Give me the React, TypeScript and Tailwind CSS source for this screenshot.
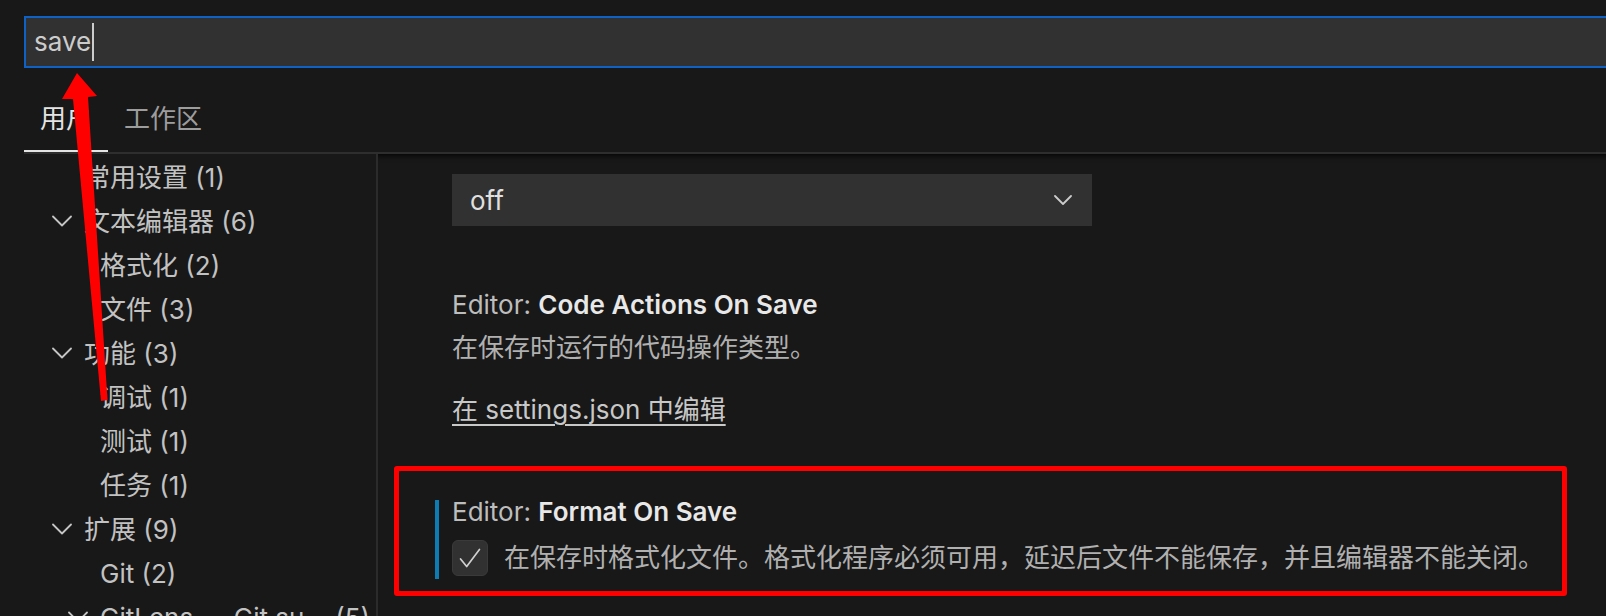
import React from "react";

type Row = { label: string; count: number; level: 1 | 2; expanded?: boolean; truncate?: boolean };

const rows: Row[] = [
  { label: "常用设置", count: 1, level: 1 },
  { label: "文本编辑器", count: 6, level: 1, expanded: true },
  { label: "格式化", count: 2, level: 2 },
  { label: "文件", count: 3, level: 2 },
  { label: "功能", count: 3, level: 1, expanded: true },
  { label: "调试", count: 1, level: 2 },
  { label: "测试", count: 1, level: 2 },
  { label: "任务", count: 1, level: 2 },
  { label: "扩展", count: 9, level: 1, expanded: true },
  { label: "Git", count: 2, level: 2 },
  { label: "GitLens — Git supercharged", count: 5, level: 2, expanded: true, truncate: true },
];

function Chevron({ className }: { className?: string }) {
  return (
    <svg width="20" height="12" viewBox="0 0 20 12" className={className} fill="none">
      <polyline points="1,1.5 10,10.5 19,1.5" stroke="#c5c5c5" strokeWidth="1.8" strokeLinejoin="round" strokeLinecap="round" />
    </svg>
  );
}

function TreeRow({ row }: { row: Row }) {
  return (
    <div className={`flex h-[44px] items-center pr-[6px] ${row.level === 1 ? "pl-[52px]" : "pl-[68px]"}`}>
      <div className="w-[32px] shrink-0 flex items-center">{row.expanded ? <Chevron /> : null}</div>
      {row.truncate ? (
        <>
          <span className="min-w-0 truncate">{row.label}</span>
          <span className="ml-auto shrink-0 pl-[8px]">({row.count})</span>
        </>
      ) : (
        <span className="whitespace-nowrap">
          {row.label} ({row.count})
        </span>
      )}
    </div>
  );
}

export default function App() {
  return (
    <div
      className="relative w-[1606px] h-[616px] overflow-hidden bg-[#181818] text-[#c5c5c5]"
      style={{ fontFamily: "Inter, 'Noto Sans CJK SC', sans-serif" }}
    >
      {/* search */}
      <div className="pt-[16px] pl-[24px]">
        <div className="h-[52px] w-[1600px] border-2 border-[#0f62c5] bg-[#313131] flex items-center pl-[8px]">
          <span className="text-[26px] leading-[30px] text-[#cccccc]">save</span>
          <span className="ml-[1px] w-[2px] h-[38px] bg-[#cccccc]" />
        </div>
      </div>

      {/* tabs */}
      <div className="ml-[24px] flex border-b-2 border-[#2e2e2e]">
        <div className="h-[84px] flex items-end pb-[16px] px-[16px] border-b-2 border-[#e4e4e4] -mb-[2px] text-[26px] leading-[30px] text-[#e4e4e4]">
          用户
        </div>
        <div className="h-[84px] flex items-end pb-[18px] px-[16px] text-[26px] leading-[30px] text-[#9d9d9d]">
          工作区
        </div>
      </div>

      {/* main */}
      <div className="flex h-[470px]">
        <div className="w-[378px] shrink-0 border-r-2 border-[#2b2b2b] pt-[1px] text-[26px] text-[#c2c2c2]">
          {rows.map((r, i) => (
            <TreeRow key={i} row={r} />
          ))}
        </div>
        <div className="flex-1 pt-[20px] shadow-[inset_0_7px_6px_-6px_#000]">
          <div className="ml-[74px] w-[640px] h-[52px] bg-[#313131] flex items-center pl-[18px] pr-[20px]">
            <span className="text-[26px] text-[#e0e0e0]">off</span>
            <svg width="18" height="10" viewBox="0 0 18 10" className="ml-auto" fill="none">
              <polyline points="1,1 9,9 17,1" stroke="#cccccc" strokeWidth="1.8" strokeLinejoin="round" strokeLinecap="round" />
            </svg>
          </div>

          <div className="ml-[74px] mt-[67px] text-[26px] leading-[24px] whitespace-nowrap">
            <span className="text-[#bdbdbd]">Editor: </span>
            <span className="font-semibold text-[#e8e8e8]">Code Actions On Save</span>
          </div>
          <div className="ml-[74px] mt-[19px] text-[26px] leading-[24px] text-[#b0b0b0] whitespace-nowrap">
            在保存时运行的代码操作类型。
          </div>
          <div className="ml-[74px] mt-[38px] text-[26px] leading-[24px] text-[#c8c8c8] underline underline-offset-[5px] decoration-[2px] whitespace-nowrap">
            在 settings.json 中编辑
          </div>

          <div className="ml-[57px] mt-[78px] border-l-[4px] border-[#0c7db4] pl-[13px] pb-[3px]">
            <div className="text-[26px] leading-[24px] whitespace-nowrap">
              <span className="text-[#bdbdbd]">Editor: </span>
              <span className="font-semibold text-[#e8e8e8]">Format On Save</span>
            </div>
            <div className="mt-[16px] flex items-center gap-[16px]">
              <div className="w-[36px] h-[36px] rounded-[6px] bg-[#313131] border border-[#3a3a3a] flex items-center justify-center">
                <svg width="36" height="36" viewBox="0 0 36 36" fill="none">
                  <polyline points="8,19 14.5,27 28,9" stroke="#d0d0d0" strokeWidth="1.8" strokeLinejoin="round" strokeLinecap="round" />
                </svg>
              </div>
              <span className="text-[26px] leading-[30px] text-[#b0b0b0] whitespace-nowrap">
                在保存时格式化文件。格式化程序必须可用，延迟后文件不能保存，并且编辑器不能关闭。
              </span>
            </div>
          </div>
        </div>
      </div>

      {/* annotation: red rectangle */}
      <div className="absolute left-[394px] top-[466px] w-[1173px] h-[130px] border-[5px] border-[#ff0000] rounded-[3px]" />

      {/* annotation: red arrow */}
      <svg className="absolute left-0 top-0" width="200" height="420" viewBox="0 0 200 420">
        <polygon points="77,73 97,96 88,97 107.5,400 101,401 73,99 62,99" fill="#ff0000" />
      </svg>
    </div>
  );
}
